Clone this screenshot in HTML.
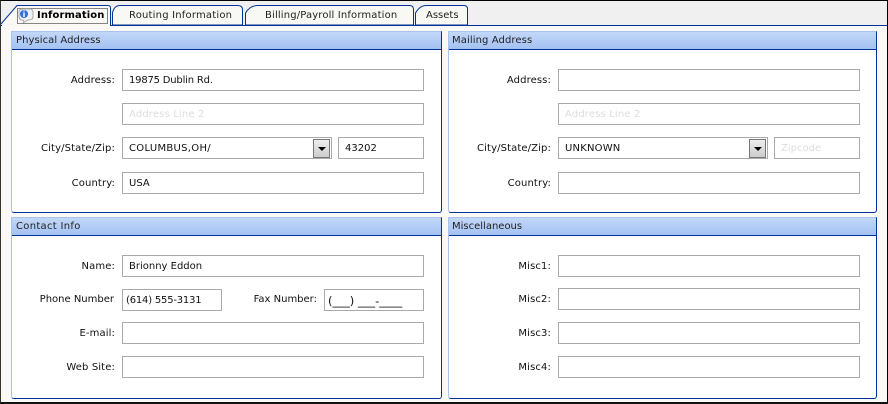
<!DOCTYPE html>
<html><head><meta charset="utf-8"><style>
html,body{margin:0;padding:0}
body{width:888px;height:404px;position:relative;overflow:hidden;background:#fbf9f5;font:10px/12px "DejaVu Sans",sans-serif;color:#111}
div{position:absolute;box-sizing:border-box}
.p{background:#fff;border-left:1px solid #a9c3ee;border-right:1px solid #003399;border-bottom:1px solid #003399;border-top:1px solid #a9c3ee;border-radius:0 0 3px 3px}
.h{left:0;right:0;top:0;height:18px;background:linear-gradient(#c3d8f8,#a3c1f2);border-bottom:1px solid #003399;padding:3px 0 0 4px;color:#222;white-space:nowrap}
.i{height:22px;border:1px solid #aaa;background:#fff;padding:5px 0 0 6px;white-space:nowrap}
.l{text-align:right;white-space:nowrap;width:110px;margin-top:1px;letter-spacing:.12px}
.g{color:#ddd}
.b{width:17px;height:19px;border:1px solid #777;background:linear-gradient(#eee,#ccc)}
.b:after{content:"";position:absolute;left:4px;top:7px;border:4px solid transparent;border-top:4px solid #000;border-bottom:0;width:0;height:0}
.t{top:10px;white-space:nowrap;color:#222}
</style></head><body>
<div style="left:0;top:0;width:888px;height:25px;background:#f0f0f0"></div>
<svg style="position:absolute;left:0;top:0" width="888" height="30">
<path d="M112.500 25V13Q114 5.500 120 5.500H238Q242.500 5.500 242.500 10V25Z" fill="#f8f8f4" stroke="#003399"/>
<path d="M245.500 25V13Q250 5.500 258 5.500H410Q413.500 5.500 413.500 10V25Z" fill="#f8f8f4" stroke="#003399"/>
<path d="M415.500 25V13Q420 5.500 426 5.500H464Q467.500 5.500 467.500 9V25Z" fill="#f8f8f4" stroke="#003399"/>
<path d="M0 25.500H888" stroke="#003399"/>
<path d="M1 24L17 5.500H108Q110.500 5.500 110.500 8V25" fill="#fbf9f5" stroke="#003399"/>
<path d="M2 24.500V26H110V24Z" fill="#fbf9f5"/>
<rect x="17.500" y="8.500" width="90" height="15" fill="none" stroke="#111" stroke-dasharray="1 1"/>
<path d="M19 11Q19 9 25 9H30Q33 9 33 13V17Q33 20 28 20L23 23Q25 20 22 20Q19 20 19 16Z" fill="#eef0f4" stroke="#aaa"/>
<circle cx="24" cy="14" r="4" fill="#2f6fe0"/>
<path d="M24 10.500V11.500M24 12.500V17" stroke="#fff" stroke-width="1.500"/>
</svg>
<div class="t" style="left:37px;font-weight:bold;color:#000;letter-spacing:.1px">Information</div>
<div class="t" style="left:129px;letter-spacing:.2px">Routing Information</div>
<div class="t" style="left:265px;letter-spacing:.15px">Billing/Payroll Information</div>
<div class="t" style="left:426px">Assets</div>

<div class="p" style="left:11px;top:31px;width:431px;height:182px"><div class="h" style="letter-spacing:.06px">Physical Address</div></div>
<div class="p" style="left:448px;top:31px;width:429px;height:182px"><div class="h" style="padding-left:3px;letter-spacing:.1px">Mailing Address</div></div>
<div class="p" style="left:11px;top:217px;width:431px;height:182px"><div class="h" style="letter-spacing:.3px">Contact Info</div></div>
<div class="p" style="left:448px;top:217px;width:429px;height:182px"><div class="h" style="padding-left:3px">Miscellaneous</div></div>

<div class="l" style="left:5px;top:74px">Address:</div>
<div class="i" style="left:122px;top:69px;width:302px;letter-spacing:-.2px">19875 Dublin Rd.</div>
<div class="i g" style="left:122px;top:103px;width:302px;letter-spacing:.15px">Address Line 2</div>
<div class="l" style="left:5px;top:142px">City/State/Zip:</div>
<div class="i" style="left:122px;top:137px;width:210px;letter-spacing:.3px">COLUMBUS,OH/</div>
<div class="b" style="left:313px;top:139px"></div>
<div class="i" style="left:338px;top:137px;width:86px">43202</div>
<div class="l" style="left:5px;top:177px">Country:</div>
<div class="i" style="left:122px;top:172px;width:302px">USA</div>

<div class="l" style="left:441px;top:74px">Address:</div>
<div class="i" style="left:558px;top:69px;width:302px"></div>
<div class="i g" style="left:558px;top:103px;width:302px;letter-spacing:.15px">Address Line 2</div>
<div class="l" style="left:441px;top:142px">City/State/Zip:</div>
<div class="i" style="left:558px;top:137px;width:210px;letter-spacing:.2px">UNKNOWN</div>
<div class="b" style="left:749px;top:139px"></div>
<div class="i g" style="left:774px;top:137px;width:86px">Zipcode</div>
<div class="l" style="left:441px;top:177px">Country:</div>
<div class="i" style="left:558px;top:172px;width:302px"></div>

<div class="l" style="left:5px;top:260px">Name:</div>
<div class="i" style="left:122px;top:255px;width:302px">Brionny Eddon</div>
<div class="l" style="left:4px;top:293px;letter-spacing:0">Phone Number</div>
<div class="i" style="left:122px;top:289px;width:100px;padding-left:3px;letter-spacing:-.2px">(614) 555-3131</div>
<div class="l" style="left:207px;top:293px;letter-spacing:0">Fax Number:</div>
<div class="i" style="left:324px;top:289px;width:100px;padding-left:3px;font-size:11.5px;line-height:12px">(___) ___-____</div>
<div class="l" style="left:5px;top:327px">E-mail:</div>
<div class="i" style="left:122px;top:322px;width:302px"></div>
<div class="l" style="left:5px;top:361px">Web Site:</div>
<div class="i" style="left:122px;top:356px;width:302px"></div>

<div class="l" style="left:441px;top:260px">Misc1:</div>
<div class="i" style="left:558px;top:255px;width:302px"></div>
<div class="l" style="left:441px;top:293px">Misc2:</div>
<div class="i" style="left:558px;top:288px;width:302px"></div>
<div class="l" style="left:441px;top:327px">Misc3:</div>
<div class="i" style="left:558px;top:322px;width:302px"></div>
<div class="l" style="left:441px;top:361px">Misc4:</div>
<div class="i" style="left:558px;top:356px;width:302px"></div>

<div style="left:0;top:0;width:888px;height:404px;border-top:1px solid #000;border-left:1px solid #333;border-right:1px solid #000;border-bottom:2px solid #111"></div>
</body></html>
